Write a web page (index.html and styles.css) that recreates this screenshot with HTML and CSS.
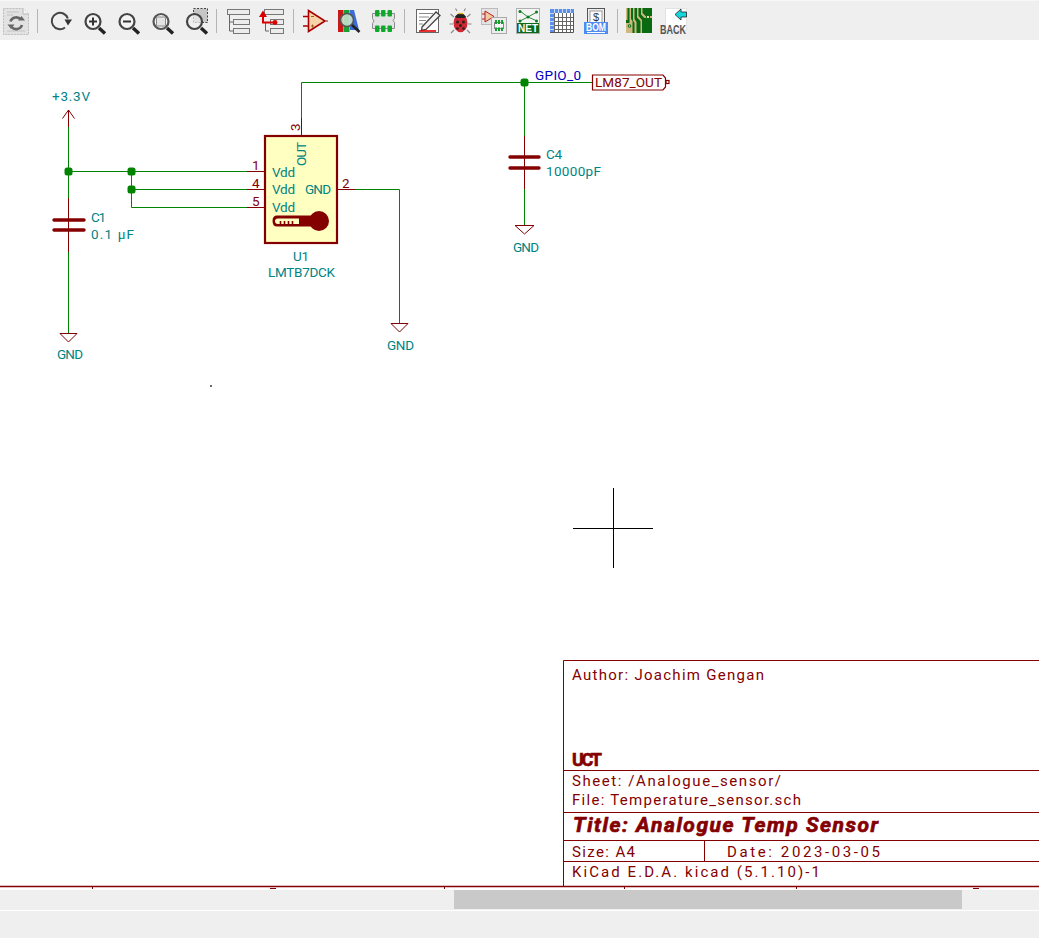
FILE: index.html
```html
<!DOCTYPE html>
<html lang="en">
<head>
    <meta charset="UTF-8">
    <meta name="viewport" content="width=device-width, initial-scale=1.0">
    <title>Eeschema - Analogue_sensor</title>
    <link rel="stylesheet" href="styles.css">
</head>
<body>
    <header class="toolbar">
        <!-- reload -->
        <svg class="ico" viewBox="0 0 34 34">
            <path d="M4.500 4.500H24L29.500 10V30.500H4.500Z" fill="#e2e2e2" stroke="#bdbdbd" stroke-dasharray="2 1"/>
            <path d="M24 4.500V10H29.500" fill="#f6f6f6" stroke="#b8b8b8"/>
            <path d="M8 8H20M8 11H14M8 27H26" stroke="#c4c4c4"/>
            <path d="M11.500 17.500A6 5.500 0 0 1 22 15.500M23 21A6 5.500 0 0 1 12.500 23" fill="none" stroke="#666" stroke-width="2.600"/>
            <path d="M19 16.500H26L22.500 12ZM8.500 20.500H15.500L12 25Z" fill="#666"/>
        </svg>
        <span class="sep"></span>
        <!-- redraw -->
        <svg class="ico" viewBox="0 0 34 34">
            <path d="M23 23.500A8.200 8.200 0 1 1 25.800 14.500" fill="none" stroke="#444" stroke-width="2"/>
            <path d="M22.500 15.500H30L26 21.500Z" fill="#333"/>
        </svg>
        <!-- zoom in -->
        <svg class="ico" viewBox="0 0 34 34">
            <circle cx="17" cy="17.500" r="7.500" fill="#f4f4f4" stroke="#444" stroke-width="2.200"/>
            <path d="M13 17.500H21M17 13.500V21.500" stroke="#333" stroke-width="2"/>
            <path d="M23 24L29 29.500" stroke="#222" stroke-width="3.400"/>
        </svg>
        <!-- zoom out -->
        <svg class="ico" viewBox="0 0 34 34">
            <circle cx="17" cy="17.500" r="7.500" fill="#f4f4f4" stroke="#444" stroke-width="2.200"/>
            <path d="M13 17.500H21" stroke="#333" stroke-width="2"/>
            <path d="M23 24L29 29.500" stroke="#222" stroke-width="3.400"/>
        </svg>
        <!-- zoom fit -->
        <svg class="ico" viewBox="0 0 34 34">
            <circle cx="17" cy="17.500" r="7.500" fill="#f4f4f4" stroke="#555" stroke-width="2.200"/>
            <rect x="12.500" y="13" width="9" height="9" rx="1" fill="#e4e4e4" stroke="#888"/>
            <path d="M23 24L29 29.500" stroke="#222" stroke-width="3.400"/>
        </svg>
        <!-- zoom selection -->
        <svg class="ico" viewBox="0 0 34 34">
            <rect x="15.500" y="4.500" width="14" height="14" fill="#c6c6c6" stroke="#444" stroke-dasharray="2 1.500"/>
            <circle cx="16.500" cy="17.500" r="7.500" fill="#f0f0f0" fill-opacity=".7" stroke="#444" stroke-width="2.200"/>
            <path d="M23 24L29 29.500" stroke="#222" stroke-width="3.400"/>
        </svg>
        <span class="sep"></span>
        <!-- hierarchy -->
        <svg class="ico" viewBox="0 0 34 34">
            <path d="M8.500 11V27H12M8.500 18H12" fill="none" stroke="#666"/>
            <rect x="6.500" y="5.500" width="22" height="5" fill="#ececec" stroke="#777"/>
            <rect x="12.500" y="15.500" width="16" height="5" fill="#ececec" stroke="#777"/>
            <rect x="12.500" y="24.500" width="16" height="5" fill="#ececec" stroke="#777"/>
        </svg>
        <!-- leave sheet -->
        <svg class="ico" viewBox="0 0 34 34">
            <path d="M10.500 18V27H14" fill="none" stroke="#666"/>
            <rect x="9.500" y="5.500" width="19" height="5" fill="#ececec" stroke="#777"/>
            <rect x="15.500" y="15.500" width="13" height="5" fill="#ececec" stroke="#777"/>
            <rect x="15.500" y="24.500" width="13" height="5" fill="#ececec" stroke="#777"/>
            <path d="M8 13V18.500H20" fill="none" stroke="#d80000" stroke-width="2"/>
            <path d="M4 13L8 6.500L12 13Z" fill="#d80000"/>
            <circle cx="20" cy="18.500" r="2.400" fill="#d80000"/>
        </svg>
        <span class="sep"></span>
        <!-- symbol editor -->
        <svg class="ico" viewBox="0 0 34 34">
            <path d="M10.500 6.500V27.500L27 17Z" fill="#f6d3a8" stroke="#a80000" stroke-width="1.600"/>
            <path d="M5 12.500H10.500M5 22H10.500" stroke="#a80000" stroke-width="1.400"/>
            <path d="M27 17H30" stroke="#c06060" stroke-width="1.600"/>
            <path d="M13 12.500H16M13 22H16M14.500 20.500V23.500" stroke="#a06020"/>
        </svg>
        <!-- library browser -->
        <svg class="ico" viewBox="0 0 34 34">
            <rect x="6" y="6" width="5.500" height="22" fill="#c81818"/>
            <rect x="12" y="6" width="5.500" height="22" fill="#18a030"/>
            <path d="M18 6H22L27 26H18Z" fill="#3c6cd8"/>
            <circle cx="15" cy="16" r="6.500" fill="#d0e4d4" fill-opacity=".85" stroke="#555" stroke-width="1.600"/>
            <path d="M20 21L27.500 28" stroke="#222" stroke-width="2.600"/>
        </svg>
        <!-- footprint -->
        <svg class="ico" viewBox="0 0 34 34">
            <path d="M6.500 9.500H28.500V14.500L27 16.500L28.500 18.500V24.500H6.500V19.500L8 17L6.500 14.500Z" fill="#e4e4e4" stroke="#8a8a8a"/>
            <rect x="9" y="6" width="4.500" height="6.500" rx="1" fill="#0fa82a"/>
            <rect x="15" y="6" width="4.500" height="6.500" rx="1" fill="#0fa82a"/>
            <rect x="21.500" y="6" width="4.500" height="6.500" rx="1" fill="#0fa82a"/>
            <rect x="9" y="21.500" width="4.500" height="6.500" rx="1" fill="#0fa82a"/>
            <rect x="15" y="21.500" width="4.500" height="6.500" rx="1" fill="#0fa82a"/>
            <rect x="21.500" y="21.500" width="4.500" height="6.500" rx="1" fill="#0fa82a"/>
        </svg>
        <span class="sep"></span>
        <!-- edit symbol fields -->
        <svg class="ico" viewBox="0 0 34 34">
            <rect x="7.500" y="5.500" width="22" height="23" fill="#fff" stroke="#666"/>
            <path d="M10 9.500H24M10 13H20M10 16.500H17M10 20H14" stroke="#888"/>
            <path d="M13 23L27 8L31 11.500L17 25.500L12.500 26.500Z" fill="#f2f2f2" stroke="#444" stroke-width="1.300"/>
            <path d="M10 27H27" stroke="#e00000" stroke-width="1.600"/>
        </svg>
        <!-- erc -->
        <svg class="ico" viewBox="0 0 34 34">
            <path d="M11 13L7.500 10M24 13L27.500 10M10 20H6.500M25 20H28.500M11 26L8 29M24 26L27 29M14 7L12.500 4.500M21 7L22.500 4.500" stroke="#888" stroke-width="1.100"/>
            <ellipse cx="17.500" cy="19" rx="7" ry="9.200" fill="#d02832"/>
            <path d="M12 12.500Q17.500 6 23 12.500L21.500 14H13.500Z" fill="#222"/>
            <path d="M15 9.500H20" stroke="#e0b020" stroke-width="1.300"/>
            <circle cx="14.500" cy="18" r="1.500" fill="#222"/><circle cx="20.500" cy="18" r="1.500" fill="#222"/>
            <circle cx="17.500" cy="21.500" r="1.500" fill="#222"/><circle cx="14.500" cy="24.500" r="1.300" fill="#222"/>
            <circle cx="20.500" cy="24.500" r="1.300" fill="#222"/>
        </svg>
        <!-- assign footprints -->
        <svg class="ico" viewBox="0 0 34 34">
            <rect x="4.500" y="4.500" width="16" height="16" fill="#e4e4e4" stroke="#bbb"/>
            <path d="M8 7V18L17 12.500Z" fill="#f6c8a0" stroke="#b02020"/>
            <path d="M5 10H8M5 15H8" stroke="#b02020"/>
            <rect x="14.500" y="13.500" width="15" height="16" fill="#ececec" stroke="#aaa"/>
            <rect x="17.500" y="18.500" width="9" height="6" fill="#f6f6f6" stroke="#888"/>
            <path d="M18 16H20V20H18ZM21 16H23V20H21ZM24 16H26V20H24ZM18 23.500H20V27H18ZM21 23.500H23V27H21ZM24 23.500H26V27H24Z" fill="#14a030"/>
        </svg>
        <!-- netlist -->
        <svg class="ico" viewBox="0 0 34 34">
            <rect x="5.500" y="4.500" width="23" height="25" fill="#f4f4f4" stroke="#b0b0b0"/>
            <path d="M9 7L17 13L26 8M9 17L17 13L26 17" fill="none" stroke="#2e8a3c"/>
            <circle cx="9" cy="7.500" r="1.500" fill="#0a7a1e"/><circle cx="25.500" cy="8" r="1.500" fill="#0a7a1e"/>
            <circle cx="17" cy="13" r="1.500" fill="#0a7a1e"/><circle cx="9" cy="17" r="1.500" fill="#0a7a1e"/><circle cx="25.500" cy="17" r="1.500" fill="#0a7a1e"/>
            <rect x="6" y="19" width="22" height="10" fill="#0a6a1a"/>
            <text class="ico-net" x="17" y="28" textLength="20" lengthAdjust="spacingAndGlyphs">NET</text>
        </svg>
        <!-- bom grid -->
        <svg class="ico" viewBox="0 0 34 34">
            <rect x="5" y="5" width="24" height="24" fill="#fff"/>
            <path d="M9.500 9V29M13.500 9V29M17.500 9V29M21.500 9V29M25.500 9V29M9 13.500H29M9 17.500H29M9 21.500H29M9 25.500H29" fill="none" stroke="#666"/>
            <path d="M5 5H29V9H9V29H5Z" fill="#5a90ea"/>
            <path d="M9.500 5V9M13.500 5V9M17.500 5V9M21.500 5V9M25.500 5V9M5 9.500H9M5 13.500H9M5 17.500H9M5 21.500H9M5 25.500H9" fill="none" stroke="#c4d8f8"/>
            <path d="M28.500 9V28.500H5" fill="none" stroke="#555"/>
        </svg>
        <!-- bom -->
        <svg class="ico" viewBox="0 0 34 34">
            <rect x="8.500" y="4.500" width="17" height="16" fill="#eee" stroke="#555"/>
            <rect x="11" y="7" width="12" height="12" fill="#fff" stroke="#999"/>
            <text class="ico-dollar" x="17" y="17">$</text>
            <rect x="5" y="18" width="24" height="12" fill="#4f8bf0"/>
            <text class="ico-bom" x="17" y="27" textLength="20" lengthAdjust="spacingAndGlyphs">BOM</text>
            <path d="M8 28.500H26" stroke="#fff"/>
        </svg>
        <span class="sep"></span>
        <!-- pcbnew -->
        <svg class="ico" viewBox="0 0 34 34">
            <rect x="4" y="4" width="26" height="25" fill="#0a6a12"/>
            <path d="M4 4H5.500V16H4ZM7.500 4H9V15L10.500 17V29H4V19H7.500ZM11 4H12.500V15L14.500 18V29H12.500V19L11 16.500ZM15 4H16.500V12L20 16V29H18.500V17L15 13.500ZM19 4H20.500V9L23.500 12H30V14H22.500L19 10.500Z" fill="#cdb97e"/>
            <circle cx="7.500" cy="22" r="1.800" fill="#0a6a12"/>
            <circle cx="7.500" cy="22" r=".8" fill="#e4e4b0"/>
            <circle cx="26" cy="13" r="1.700" fill="#e4e4b0" stroke="#0a6a12"/>
        </svg>
        <!-- back -->
        <svg class="ico" viewBox="0 0 34 34">
            <path d="M9.500 4.500H30.500V26H9.500Z" fill="#fff" stroke="#e2e2e2"/>
            <path d="M19 10.500L25 5V8H30.500V13H25V16Z" fill="#16d6dc" stroke="#222" stroke-width=".8"/>
            <text class="ico-back" x="17" y="30" textLength="26" lengthAdjust="spacingAndGlyphs">BACK</text>
        </svg>
    </header>

    <main class="canvas">
        <svg class="sheet" viewBox="0 40 1039 850" width="1039" height="850">
            <!-- wires -->
            <g class="wires">
                <path d="M68.500 127V198M68.500 252V333"/>
                <path d="M68.500 171.500H247M131.500 171.500V207.500M131.500 189.500H247M131.500 207.500H247"/>
                <path d="M355 189.500H399.500V323"/>
                <path d="M301.500 118V82.500H593"/>
                <path d="M524.500 82.500V136M524.500 189V225"/>
            </g>
            <g class="junctions">
                <rect x="64.500" y="167.500" width="8" height="8" rx="2.500"/>
                <rect x="127.500" y="167.500" width="8" height="8" rx="2.500"/>
                <rect x="127.500" y="185.500" width="8" height="8" rx="2.500"/>
                <rect x="520.500" y="78.500" width="8" height="8" rx="2.500"/>
            </g>

            <!-- C1 and power -->
            <g class="pins">
                <path d="M68.500 110V127M68.500 198V252"/>
                <path d="M62.500 118.500L68.500 110L74.500 118.500"/>
                <path d="M60 333.500H77L68.500 342Z"/>
                <path d="M391 323.500H408L399.500 332Z"/>
                <path d="M515 225.500H534L524.500 234Z"/>
                <path d="M524.500 136V189"/>
                <path d="M247 171.500H265M247 189.500H265M247 207.500H265M337 189.500H355M301.500 118V136"/>
            </g>
            <g class="plates">
                <path d="M54 220H84M54 230H84"/>
                <path d="M510 157H539M510 168H539"/>
            </g>

            <!-- U1 -->
            <rect class="body" x="265" y="136" width="72" height="107"/>
            <g class="thermo">
                <path class="thermo-fill" d="M277 215.500H312V226.500H277Q272.500 226.500 272.500 221Q272.500 215.500 277 215.500Z"/>
                <path class="thermo-tube" d="M278 218.500H299V224H278Q275 224 275 221Q275 218.500 278 218.500Z"/>
                <path class="thermo-ticks" d="M280.500 221V224M284.500 221V224M288.500 221V224M292.500 221V224"/>
                <circle class="thermo-fill" cx="319" cy="221" r="10"/>
            </g>

            <!-- hierarchical label -->
            <path class="hlabel" d="M592.500 75H663L665.500 78V87L663 90H592.500Z"/>
            <rect class="hlabel" x="666" y="80.500" width="3" height="3"/>

            <!-- schematic text -->
            <g class="txt teal">
                <text x="52" y="101" textLength="38">+3.3V</text>
                <text x="57" y="359" textLength="26">GND</text>
                <text x="387" y="350" textLength="27">GND</text>
                <text x="513" y="252" textLength="26">GND</text>
                <text x="91" y="222" textLength="15">C1</text>
                <text x="91" y="239" textLength="43">0.1 µF</text>
                <text x="546" y="159" textLength="16">C4</text>
                <text x="546" y="176" textLength="55">10000pF</text>
                <text x="293" y="261" textLength="16">U1</text>
                <text x="268" y="277" textLength="67">LMTB7DCK</text>
                <text x="272" y="177" textLength="23">Vdd</text>
                <text x="272" y="194" textLength="23">Vdd</text>
                <text x="272" y="212" textLength="23">Vdd</text>
                <text x="305" y="194" textLength="26">GND</text>
                <text x="306" y="166" textLength="24" transform="rotate(-90 306 166)">OUT</text>
            </g>
            <g class="txt dark">
                <text x="252" y="170">1</text>
                <text x="252" y="188">4</text>
                <text x="252" y="206">5</text>
                <text x="342" y="188">2</text>
                <text x="300" y="131" transform="rotate(-90 300 131)">3</text>
                <text x="595" y="87" textLength="67">LM87_OUT</text>
            </g>
            <text class="txt blue" x="535" y="80" textLength="46">GPIO_0</text>

            <!-- title block -->
            <g class="frame">
                <path d="M563.500 886V660.500H1039"/>
                <path d="M564 770.500H1039M564 812.500H1039M564 840.500H1039M564 861.500H1039"/>
                <path d="M704.500 841V861"/>
                <path class="frame-edge" d="M0 886.500H1039"/>
                <path d="M92.500 887V889M624.500 887V889M796.500 887V889M444.500 887V889M270 888.500H276M973 888.500H979"/>
            </g>
            <g class="txt dark block">
                <text x="572" y="680" textLength="192">Author: Joachim Gengan</text>
                <text x="572" y="786" textLength="209">Sheet: /Analogue_sensor/</text>
                <text x="572" y="805" textLength="229">File: Temperature_sensor.sch</text>
                <text x="572" y="857" textLength="63">Size: A4</text>
                <text x="727" y="857" textLength="153">Date: 2023-03-05</text>
                <text x="572" y="877" textLength="248">KiCad E.D.A. kicad (5.1.10)-1</text>
            </g>
            <text class="company" x="572" y="766" textLength="30">UCT</text>
            <text class="title" x="573" y="832" textLength="305">Title: Analogue Temp Sensor</text>

            <!-- cursor and stray dot -->
            <path class="cursor" d="M573 528.500H653M613.500 488V568"/>
            <rect class="dot" x="210" y="385" width="2" height="2"/>
        </svg>
    </main>

    <div class="hscroll"><div class="hscroll-thumb"></div></div>
    <footer class="status"></footer>
</body>
</html>
```

FILE: styles.css
```css
html, body {
    margin: 0;
    height: 100%;
}
body {
    display: flex;
    flex-direction: column;
    width: 1039px;
    height: 938px;
    overflow: hidden;
    background: #fff;
    font-family: Roboto, sans-serif;
}

/* toolbar */
.toolbar {
    display: flex;
    align-items: center;
    flex: none;
    box-sizing: border-box;
    height: 40px;
    padding-top: 1px;
    margin-left: -1px;
    background: #efefef;
    border-top: 1px solid #f7f7f7;
}
.ico {
    flex: none;
    width: 34px;
    height: 34px;
    overflow: visible;
}
.sep {
    flex: none;
    width: 1px;
    height: 24px;
    margin: 0 4px;
    background: #b4b4b4;
}
.ico-net, .ico-bom, .ico-back, .ico-dollar {
    font-family: "Liberation Sans", sans-serif;
    font-weight: bold;
    text-anchor: middle;
}
.ico-net { font-size: 11px; fill: #fff; }
.ico-bom { font-size: 10px; fill: #fff; }
.ico-back { font-size: 12px; fill: #555; }
.ico-dollar { font-size: 11px; font-weight: normal; fill: #333; }

/* schematic */
.canvas {
    flex: none;
    height: 850px;
    background: #fff;
}
.sheet {
    display: block;
}
.wires path {
    fill: none;
    stroke: #008400;
    stroke-width: 1;
}
.junctions rect {
    fill: #008400;
}
.pins path {
    fill: none;
    stroke: #840000;
    stroke-width: 1;
}
.plates path {
    fill: none;
    stroke: #840000;
    stroke-width: 3.4;
    stroke-linecap: round;
}
.body {
    fill: #ffffc2;
    stroke: #840000;
    stroke-width: 2.2;
}
.thermo-fill {
    fill: #840000;
}
.thermo-tube {
    fill: #ffffc2;
}
.thermo-ticks {
    stroke: #840000;
    stroke-width: 1.6;
}
.hlabel {
    fill: none;
    stroke: #840000;
    stroke-width: 1.2;
}
.txt {
    font-family: Roboto, sans-serif;
    font-size: 13.5px;
    font-weight: 400;
}
.teal { fill: #008484; }
.dark { fill: #840000; }
.blue { fill: #0000c2; }
.block { font-size: 15px; }
.frame path {
    fill: none;
    stroke: #840000;
    stroke-width: 1;
}
.frame .frame-edge {
    stroke-width: 1.5;
}
.company, .title {
    font-family: Roboto, sans-serif;
    font-weight: bold;
    fill: #840000;
    stroke: #840000;
}
.company {
    font-size: 18px;
    stroke-width: .6;
}
.title {
    font-size: 21px;
    font-style: italic;
    stroke-width: .7;
}
.cursor {
    fill: none;
    stroke: #000;
    stroke-width: 1;
}
.dot {
    fill: #6a6a6a;
}

/* bottom bars */
.hscroll {
    display: flex;
    flex: none;
    justify-content: flex-start;
    height: 20px;
    background: #efefef;
}
.hscroll-thumb {
    width: 508px;
    height: 19px;
    margin-left: 454px;
    background: #c9c9c9;
}
.status {
    flex: none;
    height: 27px;
    margin-top: 1px;
    background: #efefef;
}
```
